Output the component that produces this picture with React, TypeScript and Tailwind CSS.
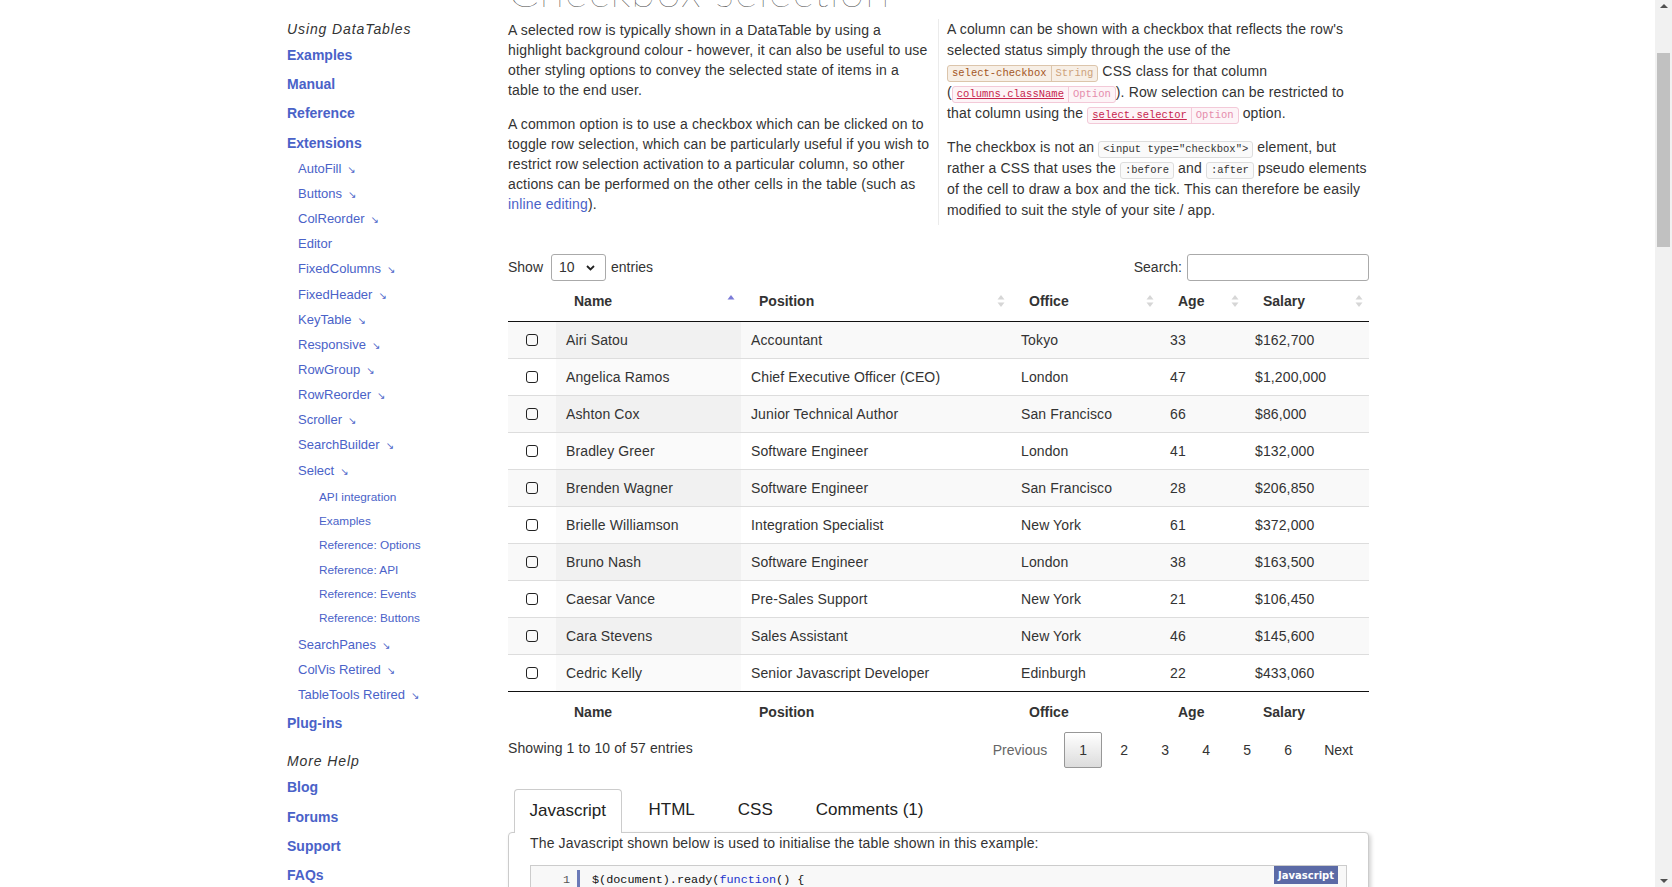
import type { ReactNode } from 'react'

type NavItem = {
  label: string
  kind: 'head' | 'main' | 'sub' | 'deep'
  arrow?: boolean
  gap?: string
}

const nav: NavItem[] = [
  { label: 'Using DataTables', kind: 'head' },
  { label: 'Examples', kind: 'main' },
  { label: 'Manual', kind: 'main' },
  { label: 'Reference', kind: 'main' },
  { label: 'Extensions', kind: 'main' },
  { label: 'AutoFill', kind: 'sub', arrow: true, gap: '-mt-[1.5px]' },
  { label: 'Buttons', kind: 'sub', arrow: true },
  { label: 'ColReorder', kind: 'sub', arrow: true },
  { label: 'Editor', kind: 'sub' },
  { label: 'FixedColumns', kind: 'sub', arrow: true },
  { label: 'FixedHeader', kind: 'sub', arrow: true },
  { label: 'KeyTable', kind: 'sub', arrow: true },
  { label: 'Responsive', kind: 'sub', arrow: true },
  { label: 'RowGroup', kind: 'sub', arrow: true },
  { label: 'RowReorder', kind: 'sub', arrow: true },
  { label: 'Scroller', kind: 'sub', arrow: true },
  { label: 'SearchBuilder', kind: 'sub', arrow: true },
  { label: 'Select', kind: 'sub', arrow: true },
  { label: 'API integration', kind: 'deep', gap: 'mt-[2.5px]' },
  { label: 'Examples', kind: 'deep' },
  { label: 'Reference: Options', kind: 'deep' },
  { label: 'Reference: API', kind: 'deep' },
  { label: 'Reference: Events', kind: 'deep' },
  { label: 'Reference: Buttons', kind: 'deep' },
  { label: 'SearchPanes', kind: 'sub', arrow: true },
  { label: 'ColVis Retired', kind: 'sub', arrow: true },
  { label: 'TableTools Retired', kind: 'sub', arrow: true },
  { label: 'Plug-ins', kind: 'main', gap: 'mt-[1px]' },
  { label: 'More Help', kind: 'head', gap: 'mt-[12.5px]' },
  { label: 'Blog', kind: 'main' },
  { label: 'Forums', kind: 'main' },
  { label: 'Support', kind: 'main' },
  { label: 'FAQs', kind: 'main' },
]

const navClass = {
  head: 'h-[23px] italic text-[14px] tracking-[0.9px] text-[#333]',
  main: 'h-[29.3px] font-bold text-[14px] text-[#4a62c8]',
  sub: 'h-[25.17px] pl-[11px] text-[13px] text-[#4a62c8]',
  deep: 'h-[24.4px] pl-[32px] text-[11.8px] text-[#4a62c8]',
}

const rows = [
  ['Airi Satou', 'Accountant', 'Tokyo', '33', '$162,700'],
  ['Angelica Ramos', 'Chief Executive Officer (CEO)', 'London', '47', '$1,200,000'],
  ['Ashton Cox', 'Junior Technical Author', 'San Francisco', '66', '$86,000'],
  ['Bradley Greer', 'Software Engineer', 'London', '41', '$132,000'],
  ['Brenden Wagner', 'Software Engineer', 'San Francisco', '28', '$206,850'],
  ['Brielle Williamson', 'Integration Specialist', 'New York', '61', '$372,000'],
  ['Bruno Nash', 'Software Engineer', 'London', '38', '$163,500'],
  ['Caesar Vance', 'Pre-Sales Support', 'New York', '21', '$106,450'],
  ['Cara Stevens', 'Sales Assistant', 'New York', '46', '$145,600'],
  ['Cedric Kelly', 'Senior Javascript Developer', 'Edinburgh', '22', '$433,060'],
]

const headers = ['Name', 'Position', 'Office', 'Age', 'Salary']

function Sidebar() {
  return (
    <div className="w-[221px] shrink-0 pt-[17px]">
      {nav.map((item, i) => (
        <div
          key={i}
          className={`flex items-center leading-none whitespace-nowrap ${navClass[item.kind]} ${item.gap ?? ''}`}
        >
          {item.label}
          {item.arrow && (
            <span className="ml-[6px] mt-[3px] text-[10px] font-['DejaVu_Sans',sans-serif]">↘</span>
          )}
        </div>
      ))}
    </div>
  )
}

function Tag({ name, type, kind }: { name: string; type: string; kind: 'string' | 'option' }) {
  const outer =
    kind === 'string'
      ? 'border-[#dcc5ab] bg-[#f7efe6]'
      : 'border-[#f3c9d8] bg-[#fdf4f7]'
  const left = kind === 'string' ? 'text-[#a4561f]' : 'text-[#c7254e] underline'
  const right =
    kind === 'string'
      ? 'text-[#cda27c] border-[#dcc5ab]'
      : 'text-[#e58cac] border-[#f3c9d8]'
  return (
    <span
      className={`inline-block rounded-[3px] border font-['Liberation_Mono',monospace] text-[10.5px] leading-[15px] tracking-normal ${outer}`}
    >
      <span className={`px-[4px] ${left}`}>{name}</span>
      <span className={`inline-block border-l px-[4px] ${right}`}>{type}</span>
    </span>
  )
}

function Code({ children }: { children: ReactNode }) {
  return (
    <span className="inline-block rounded-[3px] border border-[#ddd] bg-[#fafafa] px-[4px] font-['Liberation_Mono',monospace] text-[10.5px] leading-[15px] tracking-normal text-[#333]">
      {children}
    </span>
  )
}

function SortIcon({ active }: { active?: boolean }) {
  return (
    <svg width="8" height="14" viewBox="0 0 8 14" className="shrink-0">
      <polygon points="4,1 7.5,5.5 0.5,5.5" fill={active ? '#7b7bd8' : '#d6d6d6'} />
      {!active && <polygon points="0.5,8.5 7.5,8.5 4,13" fill="#d6d6d6" />}
    </svg>
  )
}

function Intro() {
  return (
    <div className="mt-[6px] flex text-[14px] tracking-[0.15px] text-[#333]">
      <div className="w-[430px] shrink-0 pr-[8px] pt-[1px] leading-[20px]">
        <p className="mb-[14px]">
          A selected row is typically shown in a DataTable by using a highlight background colour -
          however, it can also be useful to use other styling options to convey the selected state of
          items in a table to the end user.
        </p>
        <p>
          A common option is to use a checkbox which can be clicked on to toggle row selection, which
          can be particularly useful if you wish to restrict row selection activation to a particular
          column, so other actions can be performed on the other cells in the table (such as{' '}
          <span className="text-[#4a62c8]">inline editing</span>).
        </p>
      </div>
      <div className="w-[431px] shrink-0 border-l border-[#ebebeb] pb-[4px] pl-[8px] leading-[21px]">
        <p className="mb-[13px]">
          A column can be shown with a checkbox that reflects the row's selected status simply through
          the use of the <Tag name="select-checkbox" type="String" kind="string" /> CSS class for that
          column{' '}
          <span className="whitespace-nowrap">
            (<Tag name="columns.className" type="Option" kind="option" />).
          </span>{' '}
          Row selection can be restricted to that column using the{' '}
          <Tag name="select.selector" type="Option" kind="option" /> option.
        </p>
        <p>
          The checkbox is not an <Code>&lt;input type="checkbox"&gt;</Code> element, but rather a CSS
          that uses the <Code>:before</Code> and <Code>:after</Code> pseudo elements of the cell to draw
          a box and the tick. This can therefore be easily modified to suit the style of your site /
          app.
        </p>
      </div>
    </div>
  )
}

function Controls() {
  return (
    <div className="mt-[29px] flex h-[27px] items-center justify-between text-[14px] text-[#333]">
      <div className="flex items-center">
        <span>Show</span>
        <div className="ml-[8px] mr-[5px] flex h-[27px] w-[55px] items-center justify-between rounded-[3px] border border-[#aaa] bg-white pl-[7px] pr-[10px]">
          <span>10</span>
          <svg width="9" height="6" viewBox="0 0 9 6">
            <path d="M1 1 L4.5 4.5 L8 1" fill="none" stroke="#222" strokeWidth="1.8" />
          </svg>
        </div>
        <span>entries</span>
      </div>
      <div className="flex items-center">
        <span>Search:</span>
        <div className="ml-[5px] h-[27px] w-[182px] rounded-[3px] border border-[#aaa] bg-white" />
      </div>
    </div>
  )
}

function DataTable() {
  return (
    <table className="w-[861px] table-fixed border-collapse text-[14px] text-[#333]">
      <colgroup>
        <col className="w-[48px]" />
        <col className="w-[185px]" />
        <col className="w-[270px]" />
        <col className="w-[149px]" />
        <col className="w-[85px]" />
        <col className="w-[124px]" />
      </colgroup>
      <thead>
        <tr className="border-b border-[#111]">
          <th />
          {headers.map((h, i) => (
            <th key={h} className="py-[10px] pl-[18px] pr-[6px] text-left font-bold leading-[20px]">
              <div className="flex items-center justify-between">
                <span>{h}</span>
                <SortIcon active={i === 0} />
              </div>
            </th>
          ))}
        </tr>
      </thead>
      <tbody>
        {rows.map((row, i) => (
          <tr
            key={row[0]}
            className={`${i % 2 === 0 ? 'bg-[#f9f9f9]' : 'bg-white'} ${i > 0 ? 'border-t border-[#ddd]' : ''}`}
          >
            <td className="py-[8px] leading-[20px]">
              <div className="mx-auto h-[12px] w-[12px] rounded-[3px] border-[1.5px] border-[#222]" />
            </td>
            {row.map((cell, j) => (
              <td
                key={j}
                className={`px-[10px] py-[8px] leading-[20px] tracking-[0.12px] whitespace-nowrap ${
                  j === 0 ? (i % 2 === 0 ? 'bg-[#f1f1f1]' : 'bg-[#fafafa]') : ''
                }`}
              >
                {cell}
              </td>
            ))}
          </tr>
        ))}
      </tbody>
      <tfoot>
        <tr className="border-t border-[#111]">
          <th />
          {headers.map(h => (
            <th key={h} className="py-[10px] pl-[18px] pr-[6px] text-left font-bold leading-[20px]">
              {h}
            </th>
          ))}
        </tr>
      </tfoot>
    </table>
  )
}

function Pagination() {
  return (
    <div className="flex h-[36px] items-center justify-between text-[14px] text-[#333]">
      <span className="pb-[3px] tracking-[0.12px]">Showing 1 to 10 of 57 entries</span>
      <div className="flex items-center gap-[3px] pr-[2px]">
        <span className="px-[14px] text-[#666]">Previous</span>
        <span className="flex h-[36px] w-[38px] items-center justify-center rounded-[2px] border border-[#979797] bg-linear-to-b from-white to-[#dcdcdc]">
          1
        </span>
        {['2', '3', '4', '5', '6'].map(n => (
          <span key={n} className="flex h-[36px] w-[38px] items-center justify-center">
            {n}
          </span>
        ))}
        <span className="px-[14px]">Next</span>
      </div>
    </div>
  )
}

function Tabs() {
  const tab = 'px-[16px] pt-[11px] pb-[12px] text-[17px] leading-[20px] text-[#222]'
  return (
    <div className="mt-[21px]">
      <div className="flex gap-[11px] pl-[6px]">
        <div className="relative z-10 -mb-px rounded-t-[4px] border border-b-0 border-[#ccc] bg-white px-[14.5px] pt-[11px] pb-[12px] text-[17px] leading-[20px] text-[#222]">
          Javascript
        </div>
        <div className={tab}>HTML</div>
        <div className={tab}>CSS</div>
        <div className={tab}>Comments (1)</div>
      </div>
      <div className="rounded-[4px] border border-[#ccc] bg-white px-[21px] pb-[20px] shadow-[2px_2px_4px_rgba(0,0,0,0.18)]">
        <p className="text-[14px] leading-[20px] tracking-[0.15px] text-[#333]">
          The Javascript shown below is used to initialise the table shown in this example:
        </p>
        <div className="relative mt-[12px] border border-[#ccc] bg-[#f8f8f8]">
          <div className="flex pt-[4px] font-['Liberation_Mono',monospace] text-[11.8px] leading-[20px]">
            <span className="w-[39px] text-right text-[#555]">1</span>
            <span className="ml-[7px] w-[3px] bg-[#6b7ab8]" />
            <span className="pl-[12px] text-[#111]">
              $(document).ready(<span className="text-[#2233cc]">function</span>() {'{'}
            </span>
          </div>
          <span className="absolute right-[8px] top-0 flex h-[18px] items-center bg-[#5b6aa6] px-[4px] font-['DejaVu_Sans',sans-serif] text-[10px] font-bold text-white">
            Javascript
          </span>
        </div>
      </div>
    </div>
  )
}

function Scrollbar() {
  return (
    <div className="flex h-full w-[17px] shrink-0 flex-col items-center bg-[#f1f1f1]">
      <div className="flex h-[17px] items-start justify-center pt-[4px]">
        <svg width="8" height="4" viewBox="0 0 8 4">
          <polygon points="4,0 8,4 0,4" fill="#505050" />
        </svg>
      </div>
      <div className="mt-[36px] h-[194px] w-[13px] bg-[#c1c1c1]" />
      <div className="mt-auto flex h-[17px] items-end justify-center pb-[4px]">
        <svg width="8" height="4" viewBox="0 0 8 4">
          <polygon points="0,0 8,0 4,4" fill="#505050" />
        </svg>
      </div>
    </div>
  )
}

export default function App() {
  return (
    <div className="flex h-[887px] w-[1672px] overflow-hidden bg-white font-['Liberation_Sans',Arial,sans-serif] text-[#333]">
      <div className="flex flex-1 overflow-hidden pl-[287px]">
        <Sidebar />
        <div className="w-[861px] shrink-0">
          <h1 className="-mt-[32px] h-[45px] whitespace-nowrap font-['Lato','Open_Sans',sans-serif] text-[45px] font-thin leading-[45px] tracking-[0.7px] text-[#444]">
            Checkbox selection
          </h1>
          <Intro />
          <Controls />
          <DataTable />
          <Pagination />
          <Tabs />
        </div>
      </div>
      <Scrollbar />
    </div>
  )
}
